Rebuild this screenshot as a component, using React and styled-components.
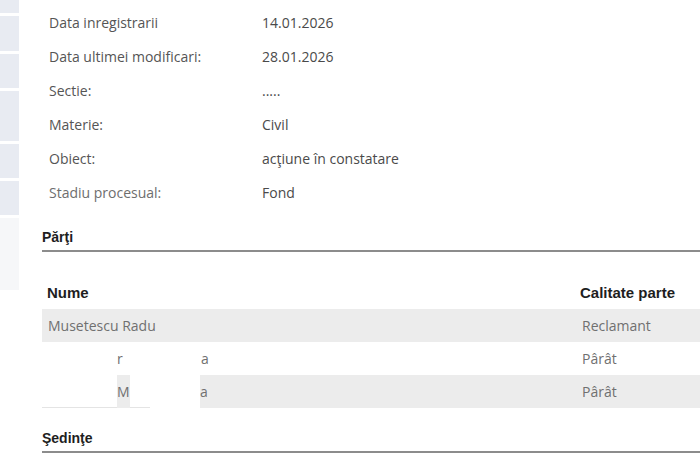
import React from 'react';
import styled, { createGlobalStyle } from 'styled-components';

const GlobalStyle = createGlobalStyle`
    html, body {
        margin: 0;
        padding: 0;
        background: #ffffff;
        overflow: hidden;
    }
`;

const Page = styled.div`
    display: flex;
    width: 700px;
    height: 472px;
    overflow: hidden;
    font-family: 'Open Sans', 'Noto Sans', sans-serif;
`;

const Sidebar = styled.div`
    display: flex;
    flex-direction: column;
    gap: 3px;
    width: 19px;
    flex-shrink: 0;
    margin-top: -1px;
`;

const SideBlock = styled.div`
    height: ${p => p.$h}px;
    background: ${p => (p.$faded ? '#f6f7f9' : '#e8ebf2')};
`;

const Main = styled.div`
    flex: 1;
    padding-left: 23px;
    min-width: 0;
`;

const InfoGrid = styled.div`
    display: grid;
    grid-template-columns: 213px 1fr;
    grid-auto-rows: 34px;
    padding: 5px 0 0 7px;
    font-size: 14px;
    align-items: center;
`;

const Label = styled.div`
    color: ${p => (p.$light ? '#6e6e6e' : '#555555')};
`;

const Value = styled.div`
    color: #4a4a4a;
`;

const SectionTitle = styled.h4`
    margin: ${p => p.$top}px 0 0 0;
    padding-bottom: 4px;
    font-family: 'Liberation Sans', Arial, sans-serif;
    font-size: 14px;
    font-weight: 700;
    color: #1e1e1e;
    border-bottom: 2px solid #8c8c8c;
    line-height: 17px;
`;

const Table = styled.div`
    margin-top: 23px;
    display: grid;
    grid-template-columns: 533px 1fr;
`;

const HeadCell = styled.div`
    height: 34px;
    display: flex;
    align-items: center;
    padding-left: ${p => p.$pad}px;
    font-family: 'Liberation Sans', Arial, sans-serif;
    font-size: 15px;
    font-weight: 700;
    color: #1e1e1e;
`;

const Cell = styled.div`
    height: 33px;
    display: flex;
    align-items: center;
    padding-left: ${p => p.$pad}px;
    font-size: 14px;
    color: #707070;
    background: ${p => (p.$striped ? '#ececec' : '#ffffff')};
`;

const Segment = styled.span`
    display: flex;
    align-items: center;
    align-self: stretch;
    flex-shrink: 0;
    width: ${p => (p.$w ? `${p.$w}px` : 'auto')};
    flex-grow: ${p => (p.$w ? 0 : 1)};
    background: ${p => (p.$mask ? '#ffffff' : 'transparent')};
    box-shadow: ${p => (p.$edge ? 'inset 0 -1px 0 #e4e4e4' : 'none')};
`;

const info = [
    ['Data inregistrarii', '14.01.2026'],
    ['Data ultimei modificari:', '28.01.2026'],
    ['Sectie:', '.....'],
    ['Materie:', 'Civil'],
    ['Obiect:', 'acţiune în constatare'],
    ['Stadiu procesual:', 'Fond', true],
];

const sideBlocks = [14, 35, 34, 50, 34, 34, 72];

const App = () => {
    return (
        <>
            <GlobalStyle />
            <Page>
                <Sidebar>
                    {sideBlocks.map((h, i) => (
                        <SideBlock key={i} $h={h} $faded={i === sideBlocks.length - 1} />
                    ))}
                </Sidebar>
                <Main>
                    <InfoGrid>
                        {info.map(([label, value, light]) => (
                            <React.Fragment key={label}>
                                <Label $light={light}>{label}</Label>
                                <Value>{value}</Value>
                            </React.Fragment>
                        ))}
                    </InfoGrid>

                    <SectionTitle $top={20}>Părţi</SectionTitle>

                    <Table>
                        <HeadCell $pad={5}>Nume</HeadCell>
                        <HeadCell $pad={5}>Calitate parte</HeadCell>

                        <Cell $pad={6} $striped>Musetescu Radu</Cell>
                        <Cell $pad={7} $striped>Reclamant</Cell>

                        <Cell $pad={0}>
                            <Segment $w={75} />
                            <Segment $w={84}>r</Segment>
                            <Segment>a</Segment>
                        </Cell>
                        <Cell $pad={7}>Pârât</Cell>

                        <Cell $pad={0} $striped>
                            <Segment $w={75} $mask $edge />
                            <Segment $w={13}>M</Segment>
                            <Segment $w={20} $mask $edge />
                            <Segment $w={50} $mask />
                            <Segment>a</Segment>
                        </Cell>
                        <Cell $pad={7} $striped>Pârât</Cell>
                    </Table>

                    <SectionTitle $top={22}>Şedinţe</SectionTitle>
                </Main>
            </Page>
        </>
    );
};

export default App;
